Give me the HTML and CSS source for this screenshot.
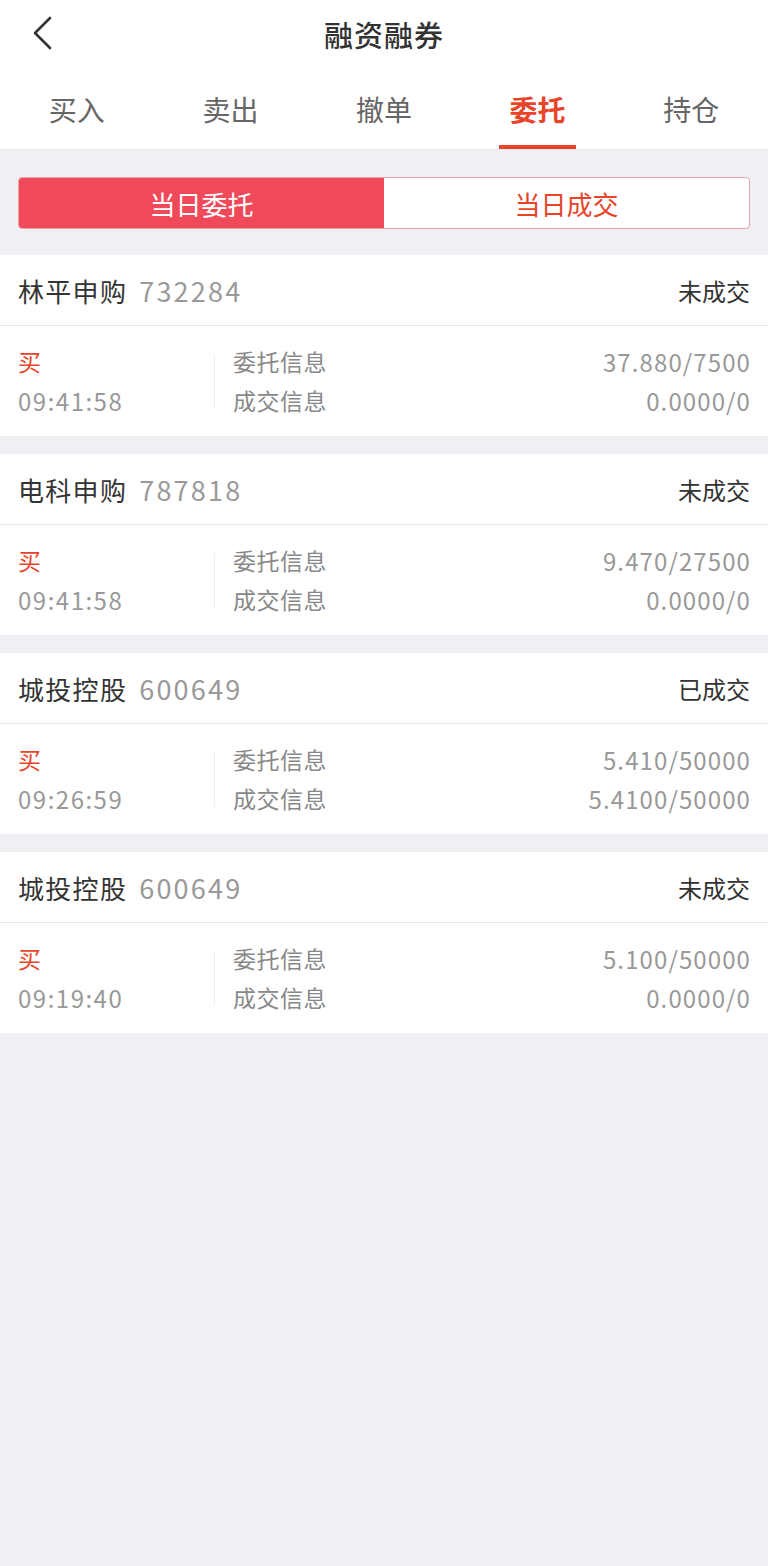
FILE: index.html
```html
<!DOCTYPE html>
<html lang="zh-CN">
<head>
  <meta charset="UTF-8" />
  <meta name="viewport" content="width=device-width, initial-scale=1.0"/>
  <title>融资融券</title>
  <link rel="stylesheet" href="styles.css">
</head>
<body>
  <div class="top">
    <div class="navbar">
      <button class="back" aria-label="返回">
        <svg width="24" height="36" viewBox="0 0 24 36"><path d="M18 3 L3 18 L18 33" fill="none" stroke="#333" stroke-width="2.6" stroke-linecap="round" stroke-linejoin="round"/></svg>
      </button>
      <h1>融资融券</h1>
    </div>
    <div class="tabs">
      <div class="tab">买入</div>
      <div class="tab">卖出</div>
      <div class="tab">撤单</div>
      <div class="tab active">委托</div>
      <div class="tab">持仓</div>
    </div>
  </div>

  <div class="segment">
    <div class="seg active">当日委托</div>
    <div class="seg">当日成交</div>
  </div>

  <div class="list">
    <div class="order">
      <div class="order-head">
        <span class="name">林平申购</span><span class="code">732284</span>
        <span class="status">未成交</span>
      </div>
      <div class="order-body">
        <div class="side">
          <div class="buy">买</div>
          <div class="time">09:41:58</div>
        </div>
        <div class="sep"></div>
        <div class="info">
          <div class="row"><span>委托信息</span><span>37.880/7500</span></div>
          <div class="row"><span>成交信息</span><span>0.0000/0</span></div>
        </div>
      </div>
    </div>

    <div class="order">
      <div class="order-head">
        <span class="name">电科申购</span><span class="code">787818</span>
        <span class="status">未成交</span>
      </div>
      <div class="order-body">
        <div class="side">
          <div class="buy">买</div>
          <div class="time">09:41:58</div>
        </div>
        <div class="sep"></div>
        <div class="info">
          <div class="row"><span>委托信息</span><span>9.470/27500</span></div>
          <div class="row"><span>成交信息</span><span>0.0000/0</span></div>
        </div>
      </div>
    </div>

    <div class="order">
      <div class="order-head">
        <span class="name">城投控股</span><span class="code">600649</span>
        <span class="status">已成交</span>
      </div>
      <div class="order-body">
        <div class="side">
          <div class="buy">买</div>
          <div class="time">09:26:59</div>
        </div>
        <div class="sep"></div>
        <div class="info">
          <div class="row"><span>委托信息</span><span>5.410/50000</span></div>
          <div class="row"><span>成交信息</span><span>5.4100/50000</span></div>
        </div>
      </div>
    </div>

    <div class="order">
      <div class="order-head">
        <span class="name">城投控股</span><span class="code">600649</span>
        <span class="status">未成交</span>
      </div>
      <div class="order-body">
        <div class="side">
          <div class="buy">买</div>
          <div class="time">09:19:40</div>
        </div>
        <div class="sep"></div>
        <div class="info">
          <div class="row"><span>委托信息</span><span>5.100/50000</span></div>
          <div class="row"><span>成交信息</span><span>0.0000/0</span></div>
        </div>
      </div>
    </div>
  </div>
</body>
</html>
```

FILE: styles.css
```css
* {
  box-sizing: border-box;
}
body {
  margin: 0;
  font-family: "Noto Sans CJK SC", "Noto Sans", sans-serif;
  background-color: #efeff4;
  color: #333;
  min-height: 1566px;
}
.top {
  background: #fff;
  border-bottom: 1px solid #e6e6e6;
}
.navbar {
  position: relative;
  height: 68px;
  display: flex;
  align-items: center;
  justify-content: center;
}
.navbar h1 {
  margin: 0;
  font-size: 29px;
  font-weight: 500;
  color: #333;
  letter-spacing: 1px;
}
.back {
  position: absolute;
  left: 32px;
  top: 15px;
  padding: 0;
  border: none;
  background: none;
}
.back svg {
  display: block;
}
.tabs {
  display: flex;
  height: 81px;
}
.tab {
  flex: 1;
  display: flex;
  align-items: center;
  justify-content: center;
  font-size: 28px;
  color: #666;
  position: relative;
}
.tab.active {
  color: #e8442a;
  font-weight: bold;
}
.tab.active::after {
  content: "";
  position: absolute;
  bottom: 0;
  left: 50%;
  width: 77px;
  margin-left: -39px;
  height: 4px;
  background: #e8442a;
}
.segment {
  display: flex;
  margin: 27px 18px 26px;
  height: 52px;
  border: 1px solid #eba4aa;
  border-radius: 4px;
  overflow: hidden;
  background: #fff;
}
.seg {
  flex: 1;
  display: flex;
  align-items: center;
  justify-content: center;
  font-size: 26px;
  color: #e8442a;
}
.seg.active {
  background: #f04a5a;
  color: #fff;
}
.list {
  display: flex;
  flex-direction: column;
  gap: 18px;
}
.order {
  background: #fff;
}
.order-head {
  display: flex;
  align-items: center;
  height: 71px;
  padding: 0 18px;
  border-bottom: 1px solid #e8e8e8;
}
.name {
  font-size: 26px;
  color: #333;
  letter-spacing: 1.3px;
}
.code {
  font-size: 27px;
  color: #999;
  margin-left: 12px;
  letter-spacing: 2.2px;
}
.status {
  margin-left: auto;
  font-size: 24px;
  color: #333;
}
.order-body {
  display: flex;
  align-items: center;
  height: 110px;
  padding: 0 18px;
}
.side {
  width: 196px;
  line-height: 39px;
}
.sep {
  width: 1px;
  height: 55px;
  background: #eee;
}
.buy {
  font-size: 23px;
  color: #e8442a;
}
.time {
  font-size: 24px;
  color: #999;
  letter-spacing: 1.5px;
}
.info {
  flex: 1;
  padding-left: 18px;
  line-height: 39px;
}
.row {
  display: flex;
  justify-content: space-between;
  font-size: 23px;
  color: #888;
}
.row span:first-child {
  letter-spacing: 0.5px;
}
.row span:last-child {
  font-size: 24px;
  color: #999;
  letter-spacing: 1.1px;
  margin-right: -1px;
}
```
